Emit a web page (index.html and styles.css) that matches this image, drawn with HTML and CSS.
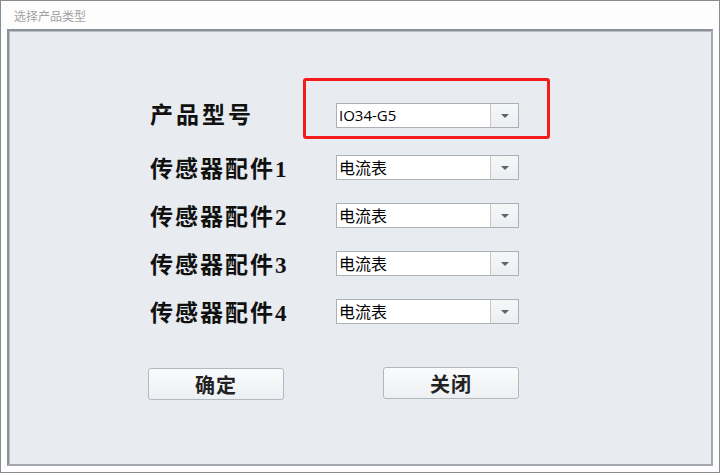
FILE: index.html
```html
<!DOCTYPE html>
<html lang="zh">
<head>
<meta charset="utf-8">
<title>选择产品类型</title>
<link rel="stylesheet" href="styles.css">
</head>
<body>
<div class="window">
  <div class="titlebar">选择产品类型</div>
  <div class="panel">
    <div class="form">
      <div class="row row-main">
        <div class="label">产品型号</div>
        <div class="combo">
          <span class="value latin">IO34-G5</span>
          <span class="drop"><span class="arrow"></span></span>
          <span class="highlight"></span>
        </div>
      </div>
      <div class="row">
        <div class="label">传感器配件1</div>
        <div class="combo"><span class="value">电流表</span><span class="drop"><span class="arrow"></span></span></div>
      </div>
      <div class="row">
        <div class="label">传感器配件2</div>
        <div class="combo"><span class="value">电流表</span><span class="drop"><span class="arrow"></span></span></div>
      </div>
      <div class="row">
        <div class="label">传感器配件3</div>
        <div class="combo"><span class="value">电流表</span><span class="drop"><span class="arrow"></span></span></div>
      </div>
      <div class="row">
        <div class="label">传感器配件4</div>
        <div class="combo"><span class="value">电流表</span><span class="drop"><span class="arrow"></span></span></div>
      </div>
    </div>
    <div class="buttons">
      <button class="btn">确定</button>
      <button class="btn btn-close">关闭</button>
    </div>
  </div>
</div>
</body>
</html>
```
FILE: styles.css
```css
html, body {
  margin: 0;
  padding: 0;
  background: #fdfdfd;
}
.window {
  box-sizing: border-box;
  width: 720px;
  height: 473px;
  border: 1px solid #878c92;
  background: #fdfdfd;
  display: flex;
  flex-direction: column;
  padding: 0 6px 6px 6px;
}
.titlebar {
  height: 28px;
  line-height: 30px;
  padding-left: 7px;
  font-family: "Noto Sans CJK SC", sans-serif;
  font-size: 12px;
  color: #a2a2a2;
}
.panel {
  flex: 1;
  background: #e8ebef;
  border-top: 2px solid #8c9197;
  border-left: 2px solid #8c9197;
  border-right: 2px solid #a3a8ae;
  border-bottom: 2px solid #a3a8ae;
  box-shadow: inset 1px 1px 0 #b9bec4;
  padding: 72px 0 0 141px;
}
.form {
  display: flex;
  flex-direction: column;
  gap: 23px;
}
.row {
  display: flex;
  align-items: center;
  height: 25px;
}
.row-main {
  margin-bottom: 4px;
}
.label {
  width: 186px;
  font-family: "Liberation Serif", "Noto Sans CJK SC", serif;
  font-weight: 600;
  font-size: 23px;
  letter-spacing: 2px;
  color: #111;
  line-height: 25px;
  padding-top: 3px;
  white-space: nowrap;
}
.row-main .label {
  letter-spacing: 3px;
  padding-top: 0;
}
.combo {
  position: relative;
  box-sizing: border-box;
  width: 183px;
  height: 25px;
  border: 1px solid #acb0b6;
  background: #fff;
  display: flex;
  align-items: center;
}
.value {
  flex: 1;
  padding-left: 2px;
  font-family: "Noto Sans CJK SC", sans-serif;
  font-size: 16px;
  color: #000;
  line-height: 23px;
}
.value.latin {
  font-family: "Open Sans", "Noto Sans", sans-serif;
  font-size: 15px;
}
.drop {
  width: 27px;
  height: 23px;
  border-left: 1px solid #c4c8cd;
  background: linear-gradient(#f6f7f9, #eceef1);
  display: flex;
  align-items: center;
  justify-content: center;
}
.arrow {
  width: 0;
  height: 0;
  border-left: 4px solid transparent;
  border-right: 4px solid transparent;
  border-top: 4px solid #5f6368;
}
.highlight {
  position: absolute;
  left: -34px;
  top: -26px;
  width: 247px;
  height: 61px;
  box-sizing: border-box;
  border: 3px solid #f51b1b;
  border-radius: 3px;
  pointer-events: none;
}
.buttons {
  display: flex;
  gap: 99px;
  margin-top: 44px;
  margin-left: -2px;
}
.btn {
  box-sizing: border-box;
  width: 136px;
  height: 32px;
  border: 1px solid #b3b8be;
  border-radius: 3px;
  background: linear-gradient(#fafbfc, #edf0f3);
  font-family: "Liberation Serif", "Noto Sans CJK SC", serif;
  font-weight: 600;
  font-size: 20px;
  letter-spacing: 1px;
  color: #222;
  padding: 0;
}
.btn-close {
  margin-top: -1px;
}
```
